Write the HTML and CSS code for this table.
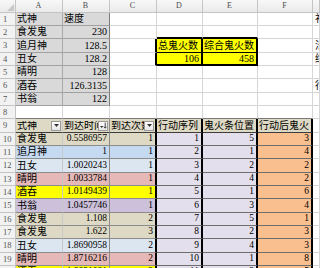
FILE: index.html
```html
<!DOCTYPE html>
<html lang="zh">
<head>
<meta charset="utf-8">
<title>Sheet</title>
<link rel="stylesheet" href="styles.css">
</head>
<body>
<div class="sheet">
  <div class="c hd corner"><svg width="7" height="7" viewBox="0 0 7 7"><path d="M7 0V7H0Z" fill="#c8c8c8"/></svg></div>
  <div class="c hd">A</div><div class="c hd">B</div><div class="c hd">C</div><div class="c hd">D</div><div class="c hd">E</div><div class="c hd">F</div><div class="c hd"></div>

  <div class="c rh">1</div><div class="c g">式神</div><div class="c g gb">速度</div><div class="c"></div><div class="c"></div><div class="c"></div><div class="c"></div><div class="c gcol">补</div>
  <div class="c rh">2</div><div class="c g">食发鬼</div><div class="c g gb n">230</div><div class="c"></div><div class="c ytop"></div><div class="c ytop"></div><div class="c"></div><div class="c gcol"></div>
  <div class="c rh">3</div><div class="c g">追月神</div><div class="c g gb n">128.5</div><div class="c yleft"></div><div class="c y ymid">总鬼火数</div><div class="c y ymid yright">综合鬼火数</div><div class="c"></div><div class="c gcol">法</div>
  <div class="c rh">4</div><div class="c g">丑女</div><div class="c g gb n">128.2</div><div class="c yleft"></div><div class="c y ybot n">106</div><div class="c y ybot yright n">458</div><div class="c"></div><div class="c gcol">综</div>
  <div class="c rh">5</div><div class="c g">晴明</div><div class="c g gb n">128</div><div class="c"></div><div class="c"></div><div class="c"></div><div class="c"></div><div class="c gcol"></div>
  <div class="c rh">6</div><div class="c g">酒吞</div><div class="c g gb n">126.3135</div><div class="c"></div><div class="c"></div><div class="c"></div><div class="c"></div><div class="c gcol">行</div>
  <div class="c rh">7</div><div class="c g">书翁</div><div class="c g gb n">122</div><div class="c"></div><div class="c"></div><div class="c"></div><div class="c"></div><div class="c gcol"></div>
  <div class="c rh">8</div><div class="c tt"></div><div class="c tt"></div><div class="c tt"></div><div class="c tt"></div><div class="c tt"></div><div class="c tt"></div><div class="c gcol"></div>

  <div class="c rh">9</div>
  <div class="c th ca"><span class="lbl">式神</span><span class="fb"><svg width="5" height="3" viewBox="0 0 5 3"><path d="M0 0H5L2.5 3Z" fill="#333"/></svg></span></div>
  <div class="c th cb"><span class="lbl">到达时间</span><span class="fb"><svg width="7" height="7" viewBox="0 0 7 7"><path d="M0 4H3.5L1.75 6Z" fill="#333"/><path d="M5.2 0.5V6M4 4.8L5.2 6.2L6.4 4.8" stroke="#333" stroke-width="0.9" fill="none"/></svg></span></div>
  <div class="c th cc"><span class="lbl">到达次数</span><span class="fb"><svg width="5" height="3" viewBox="0 0 5 3"><path d="M0 0H5L2.5 3Z" fill="#333"/></svg></span></div>
  <div class="c th cd">行动序列</div><div class="c th ce">鬼火条位置</div><div class="c th cf">行动后鬼火</div><div class="c gcol"></div>

  <div class="c rh">10</div><div class="c ca sf">食发鬼</div><div class="c cb sf t">0.5586957</div><div class="c cc sf t">1</div><div class="c cd pu t">1</div><div class="c ce pu t">5</div><div class="c cf or t">3</div><div class="c gcol"></div>
  <div class="c rh">11</div><div class="c ca zy">追月神</div><div class="c cb zy t">1</div><div class="c cc zy t">1</div><div class="c cd pu t">2</div><div class="c ce pu t">1</div><div class="c cf or t">4</div><div class="c gcol"></div>
  <div class="c rh">12</div><div class="c ca cn">丑女</div><div class="c cb cn t">1.0020243</div><div class="c cc cn t">1</div><div class="c cd pu t">3</div><div class="c ce pu t">2</div><div class="c cf or t">2</div><div class="c gcol"></div>
  <div class="c rh">13</div><div class="c ca qm">晴明</div><div class="c cb qm t">1.0033784</div><div class="c cc qm t">1</div><div class="c cd pu t">4</div><div class="c ce pu t">4</div><div class="c cf or t">2</div><div class="c gcol"></div>
  <div class="c rh">14</div><div class="c ca jt">酒吞</div><div class="c cb jt t">1.0149439</div><div class="c cc jt t">1</div><div class="c cd pu t">5</div><div class="c ce pu t">1</div><div class="c cf or t">6</div><div class="c gcol"></div>
  <div class="c rh">15</div><div class="c ca sw">书翁</div><div class="c cb sw t">1.0457746</div><div class="c cc sw t">1</div><div class="c cd pu t">6</div><div class="c ce pu t">3</div><div class="c cf or t">4</div><div class="c gcol"></div>
  <div class="c rh">16</div><div class="c ca sf">食发鬼</div><div class="c cb sf t">1.108</div><div class="c cc sf t">2</div><div class="c cd pu t">7</div><div class="c ce pu t">5</div><div class="c cf or t">1</div><div class="c gcol"></div>
  <div class="c rh">17</div><div class="c ca sf">食发鬼</div><div class="c cb sf t">1.622</div><div class="c cc sf t">3</div><div class="c cd pu t">8</div><div class="c ce pu t">2</div><div class="c cf or t">3</div><div class="c gcol"></div>
  <div class="c rh">18</div><div class="c ca cn">丑女</div><div class="c cb cn t">1.8690958</div><div class="c cc cn t">2</div><div class="c cd pu t">9</div><div class="c ce pu t">4</div><div class="c cf or t">3</div><div class="c gcol"></div>
  <div class="c rh">19</div><div class="c ca qm">晴明</div><div class="c cb qm t">1.8716216</div><div class="c cc qm t">2</div><div class="c cd pu t">10</div><div class="c ce pu t">1</div><div class="c cf or t">8</div><div class="c gcol"></div>
  <div class="c rh">20</div><div class="c ca jt">酒吞</div><div class="c cb jt t">1.8831081</div><div class="c cc jt t">2</div><div class="c cd pu t">11</div><div class="c ce pu t">3</div><div class="c cf or t">5</div><div class="c gcol"></div>
</div>
</body>
</html>
```
FILE: styles.css
```css
* { box-sizing: border-box; margin: 0; padding: 0; }
html, body { width: 320px; height: 268px; overflow: hidden; background: #fff; }
body {
  font-family: "Liberation Serif", "Noto Sans CJK SC", serif;
  font-size: 10px;
  color: #000;
}
.sheet {
  display: grid;
  grid-template-columns: 16px 47px 47px 47px 46px 55px 55px 7px;
  grid-template-rows: 13px repeat(7, 13px 13px 14px);
}
.c {
  border-right: 1px solid #d6d6d6;
  border-bottom: 1px solid #d6d6d6;
  overflow: hidden;
  white-space: nowrap;
  display: flex;
  align-items: center;
  padding: 0 2px 0 1px;
  line-height: 1;
  min-width: 0;
}
.n { justify-content: flex-end; font-size: 10px; }
.t { justify-content: flex-end; font-size: 9.5px; }
.hd {
  background: linear-gradient(#f8f8f8, #eaeaea);
  color: #4a4a4a;
  font-size: 8px;
  justify-content: center;
  border-color: #c4c4c4;
}
.corner { justify-content: flex-end; align-items: flex-end; padding: 0 1px 1px 0; }
.rh {
  background: #f2f2f2;
  color: #555;
  font-size: 8.5px;
  padding-left: 3px;
  border-color: #c4c4c4;
}
.gcol { padding-left: 2px; }

/* gray lookup block */
.g { background: #d9d9d9; border-right-color: #a9a9a9; border-bottom-color: #a0a0a0; }
.gb { border-right-color: #7c7c7c; }

/* yellow summary box */
.ytop { border-bottom: 2px solid #000; }
.yleft { border-right: 2px solid #000; }
.y { background: #ffff00; border-right: 2px solid #000; }
.ymid { border-bottom: 1px solid #000; }
.ybot { border-bottom: 2px solid #000; }

/* table */
.tt { border-bottom-color: #7a7a7a; }
.th { background: #ddd9c4; border-bottom-color: #3c3c3c; }
.lbl { flex: 1; overflow: hidden; min-width: 0; }
.fb {
  flex: none;
  width: 10px;
  height: 10px;
  border: 1px solid #9a9a9a;
  background: linear-gradient(#ffffff, #e6e6e6);
  display: flex;
  align-items: center;
  justify-content: center;
  margin-right: -1px;
}
.ca { border-right-color: #c8c8c8; border-bottom-color: #8c8c8c; }
.cb { border-right-color: #8c8c8c; border-bottom-color: #8c8c8c; }
.cc { border-right: 2px solid #000; border-bottom-color: #8c8c8c; }
.cd { border-right: 2px solid #000; border-bottom-color: #6e6e6e; }
.ce { border-right: 2px solid #000; border-bottom-color: #6e6e6e; }
.cf { border-right: 2px solid #000; border-bottom-color: #6e6e6e; }
.th.ca, .th.cb, .th.cc, .th.cd, .th.ce, .th.cf { border-bottom-color: #3c3c3c; }

.sf { background: #ddd9c4; }
.zy { background: #c5d9f1; }
.cn { background: #dce6f1; }
.qm { background: #e6b8b7; }
.jt { background: #ffff00; }
.sw { background: #ccc0da; }
.pu { background: #e4dfec; }
.or { background: #fabf8f; }
```
